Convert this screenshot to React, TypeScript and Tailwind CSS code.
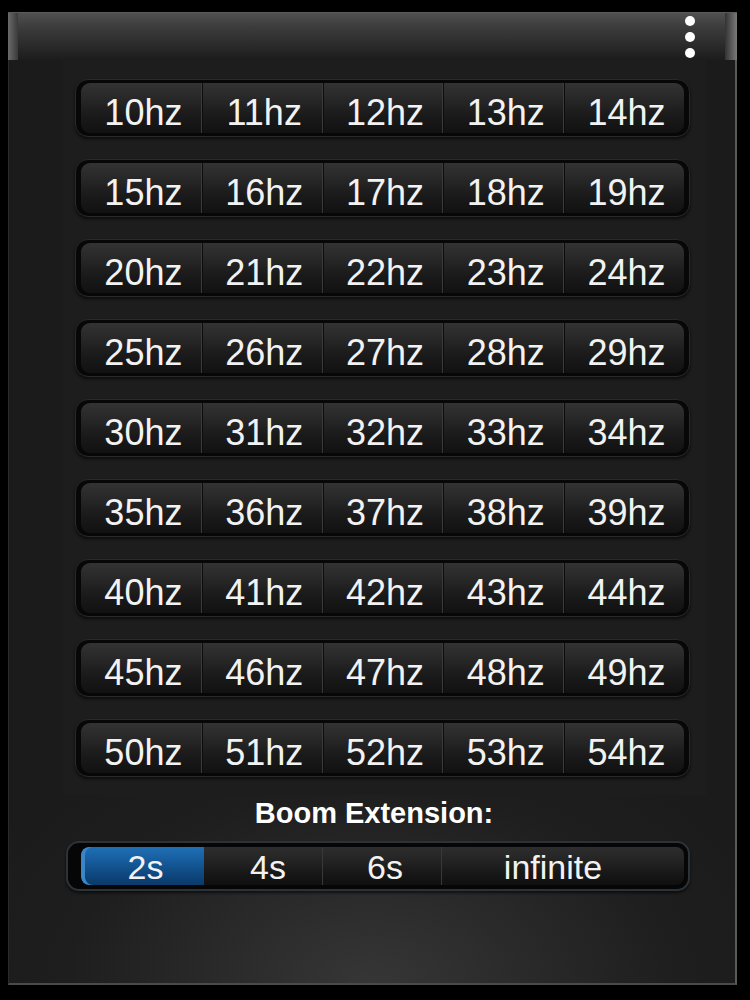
import React from 'react';

const ROWS = [10, 15, 20, 25, 30, 35, 40, 45, 50].map((start) =>
  [0, 1, 2, 3, 4].map((i) => `${start + i}hz`)
);

const font = { fontFamily: '"Liberation Sans", Arial, sans-serif' };

function HzRow({ labels }: { labels: string[] }) {
  return (
    <div className="w-[615px] h-[58px] rounded-[13px] bg-[#070707] border border-[#2a2a2a] px-[5px] py-[3px] shadow-[0_2px_3px_rgba(0,0,0,0.6)]">
      <div className="flex h-full rounded-[9px] overflow-hidden">
        {labels.map((label, i) => (
          <div
            key={label}
            className={`flex-1 flex items-center justify-center pl-[5px] bg-[linear-gradient(to_bottom,#333333_0%,#262626_35%,#1a1a1a_65%,#111111_100%)] text-[36px] text-[#f2f2f2] ${
              i > 0 ? 'border-l border-l-[#3b3b3b] shadow-[inset_1px_0_0_#0c0c0c]' : ''
            }`}
          >
            <span className="leading-none pt-[9px]">{label}</span>
          </div>
        ))}
      </div>
    </div>
  );
}

function Segmented() {
  const opts = [
    { label: '2s', w: 'w-[123px] pl-[6px]' },
    { label: '4s', w: 'w-[118px] pl-[10px]' },
    { label: '6s', w: 'w-[119px] pl-[6px]' },
    { label: 'infinite', w: 'flex-1 pr-[20px]' },
  ];
  return (
    <div className="w-[624px] h-[50px] rounded-[13px] bg-[#060606] border-2 border-[#2c3338] pl-[13px] pr-[4px] py-[4px] shadow-[0_2px_3px_rgba(0,0,0,0.6)]">
      <div className="flex h-full rounded-[8px] overflow-hidden">
        {opts.map((o, i) => (
          <div
            key={o.label}
            className={`${o.w} flex items-center justify-center text-[34px] text-[#f2f2f2] ${
              i === 0
                ? 'rounded-l-[8px] bg-[linear-gradient(to_bottom,#1f6fb5_0%,#155a99_40%,#0e467d_75%,#0a3a69_100%)] shadow-[inset_4px_0_0_#3b86c8]'
                : 'bg-[linear-gradient(to_bottom,#2e2e2e_0%,#222222_40%,#171717_70%,#101010_100%)]'
            } ${i > 1 ? 'border-l border-l-[#383838]' : ''}`}
          >
            <span className="leading-[36px] pt-[2px]">{o.label}</span>
          </div>
        ))}
      </div>
    </div>
  );
}

export default function App() {
  return (
    <div className="w-[750px] h-[1000px] bg-black pt-[12px] pl-[8px]" style={font}>
      <div className="w-[729px] h-[973px] flex flex-col">
        {/* title bar */}
        <div className="h-[48px] flex bg-[linear-gradient(to_bottom,#505050_0%,#3c3c3c_30%,#2a2a2a_70%,#1c1c1c_100%)] border-t border-t-[#5a5a5a]">
          <div className="w-[10px] bg-[linear-gradient(to_right,#6a6a6a,#3a3a3a)]" />
          <div className="flex-1 flex justify-end pr-[30px] pt-[3px]">
            <div className="flex flex-col gap-[6px]">
              <div className="w-[10px] h-[10px] rounded-full bg-white" />
              <div className="w-[10px] h-[10px] rounded-full bg-white" />
              <div className="w-[10px] h-[10px] rounded-full bg-white" />
            </div>
          </div>
          <div className="w-[12px] bg-[linear-gradient(to_right,#333333,#7a7a7a)]" />
        </div>

        {/* body */}
        <div className="flex-1 flex flex-col border-l border-l-[#2a2a2a] border-r-2 border-r-[#5a5a5a] border-b-2 border-b-[#4a4a4a] bg-[radial-gradient(ellipse_60%_30%_at_50%_100%,#363636_0%,#1e1e1e_70%,#1b1b1b_100%)]">
          <div className="ml-[54px] w-[643px] h-[735px] bg-[#1d1d1d] pt-[19px] pl-[12px] flex flex-col gap-[22px]">
            {ROWS.map((r) => (
              <HzRow key={r[0]} labels={r} />
            ))}
          </div>
          <div className="flex justify-center pl-[4px] pt-[4px]">
            <span className="text-[29px] font-bold text-white leading-none">Boom Extension:</span>
          </div>
          <div className="pl-[57px] pt-[13px]">
            <Segmented />
          </div>
        </div>
      </div>
    </div>
  );
}
